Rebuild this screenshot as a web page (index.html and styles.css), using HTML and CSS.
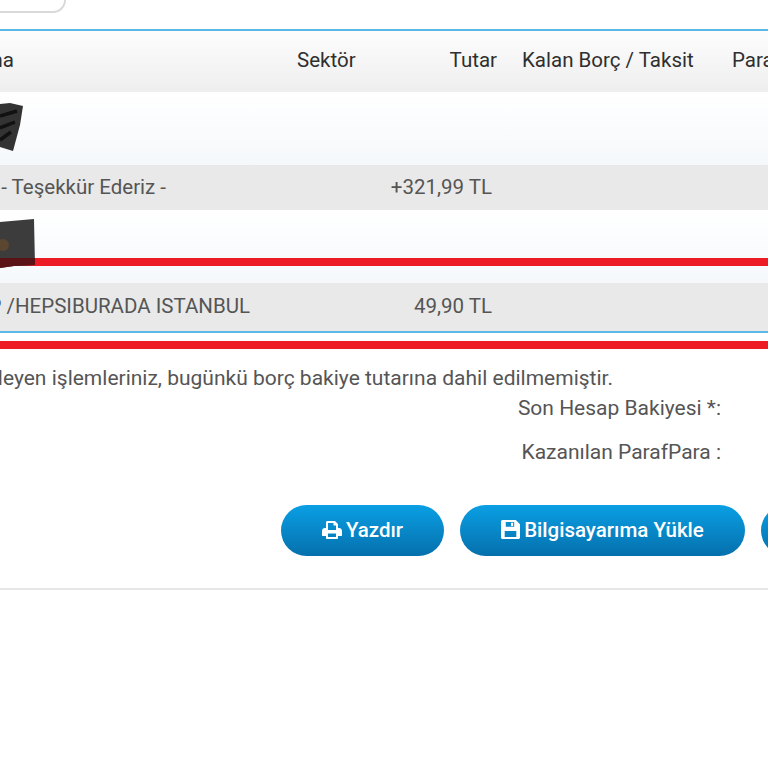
FILE: index.html
```html
<!DOCTYPE html>
<html lang="tr">
<head>
<meta charset="utf-8">
<title>Ekstre</title>
<link rel="stylesheet" href="styles.css">
</head>
<body>
<div class="page">
  <div class="search-box"></div>
  <div class="table">
    <div class="row head">
      <div class="cell desc desc-head">Açıklama</div>
      <div class="cell">Sektör</div>
      <div class="cell amount">Tutar</div>
      <div class="cell debt">Kalan Borç / Taksit</div>
      <div class="cell">ParafPara</div>
    </div>
    <div class="row date">
      <svg class="scribble scribble-one" viewBox="0 0 24 50"><polygon points="0,1 10,0 23,3 20,22 13,48 0,44" fill="#333"/><path d="M0 13 L17 8 M0 25 L15 19 M0 37 L11 29" stroke="#111" stroke-width="3.500" fill="none"/></svg>
    </div>
    <div class="row entry">
      <div class="cell desc desc-thanks">Ödeme - Teşekkür Ederiz -</div>
      <div class="cell"></div>
      <div class="cell amount value">+321,99 TL</div>
    </div>
    <div class="row date">
      <div class="red-line"></div>
      <svg class="scribble scribble-two" viewBox="0 0 35 50"><polygon points="0,3 34,0 35,46 14,47 0,49" fill="#3c3c3c"/><polygon points="0,39 35,39 35,46 14,47 0,49" fill="#5a1216"/><circle cx="3" cy="26" r="6" fill="#5b4630"/></svg>
    </div>
    <div class="row entry entry-last">
      <div class="cell desc desc-shop">ÖDEME APP /HEPSIBURADA ISTANBUL</div>
      <div class="cell"></div>
      <div class="cell amount value">49,90 TL</div>
    </div>
  </div>
  <div class="red-line-flow"></div>
  <div class="note">Bugün işleyen işlemleriniz, bugünkü borç bakiye tutarına dahil edilmemiştir.</div>
  <div class="summary">
    <div class="summary-line">Son Hesap Bakiyesi *:</div>
    <div class="summary-line">Kazanılan ParafPara :</div>
  </div>
  <div class="actions">
    <button class="btn btn-print" type="button">
      <svg class="icon" viewBox="0 0 20 20"><path fill-rule="evenodd" d="M4 8V2.500C4 1.700 4.700 1 5.500 1H13L16 4V8H17C18.700 8 20 9.300 20 11V15.500C20 15.800 19.800 16 19.500 16H16V18C16 18.600 15.600 19 15 19H5C4.400 19 4 18.600 4 18V16H.5C.2 16 0 15.800 0 15.500V11C0 9.300 1.300 8 3 8ZM6 3V10H14V5.500H11.500V3ZM6 13.500V17H14V13.500Z"/></svg>
      Yazdır
    </button>
    <button class="btn btn-save" type="button">
      <svg class="icon icon-save" viewBox="0 0 18 18"><path fill-rule="evenodd" d="M1.500 0H14L18 4V16.500C18 17.300 17.300 18 16.500 18H1.500C.7 18 0 17.300 0 16.500V1.500C0 .7 .7 0 1.500 0ZM4.500 1.800V6.500H12.500V1.800ZM9.500 2.500H11.500V5.800H9.500ZM3.500 10.500V16.200H14.500V10.500Z"/></svg>
      Bilgisayarıma Yükle
    </button>
    <button class="btn btn-next" type="button"></button>
  </div>
  <div class="rule"></div>
</div>
</body>
</html>
```
FILE: styles.css
```css
html, body {
  margin: 0;
  padding: 0;
  height: 768px;
  overflow: hidden;
  background: #fff;
}

.page {
  font-family: Roboto, "Liberation Sans", sans-serif;
  font-size: 20.5px;
  color: #555;
  width: 1100px;
  margin-left: -120px;
}

.search-box {
  box-sizing: border-box;
  width: 186px;
  height: 13px;
  margin-bottom: 16px;
  border: solid #d9d9d9;
  border-width: 0 2px 2px 0;
  border-bottom-right-radius: 16px;
}

.table {
  border-top: 2px solid #5ab9e6;
  border-bottom: 2px solid #5ab9e6;
}

.row {
  display: grid;
  grid-template-columns: 417px 85px 115px 235px 1fr;
  align-items: center;
  position: relative;
}

.head {
  box-sizing: border-box;
  height: 61px;
  padding-bottom: 3px;
  color: #2f2f2f;
  background: linear-gradient(#fdfdfd, #eeeeee);
}

.date {
  height: 73px;
  background: linear-gradient(#ffffff, #f5f8fb);
}

.entry {
  box-sizing: border-box;
  height: 45px;
  padding-bottom: 2px;
  background: #e9e9e9;
}

.entry-last {
  height: 48px;
}

.cell {
  white-space: nowrap;
}

.desc {
  text-align: right;
}

.desc-head {
  padding-right: 283px;
}

.desc-thanks {
  padding-right: 131px;
}

.desc-shop {
  padding-right: 47px;
}

.amount {
  text-align: right;
}

.value {
  padding-right: 5px;
}

.debt {
  padding-left: 25px;
}

.red-line {
  position: absolute;
  left: 0;
  right: 0;
  top: 48px;
  height: 8px;
  background: #ed1c24;
}

.red-line-flow {
  height: 8px;
  margin-top: 8px;
  background: #ed1c24;
}

.scribble {
  position: absolute;
  left: 120px;
}

.scribble-one {
  top: 11px;
  width: 24px;
  height: 50px;
}

.scribble-two {
  top: 9px;
  width: 35px;
  height: 50px;
}

.note {
  margin-top: 17px;
  width: 733px;
  font-size: 21px;
  text-align: right;
  white-space: nowrap;
  line-height: 24px;
}

.summary {
  width: 841px;
  margin-top: 3px;
  font-size: 21px;
  text-align: right;
}

.summary-line {
  height: 44px;
  line-height: 30px;
}

.actions {
  display: flex;
  gap: 16px;
  margin-top: 24px;
  margin-left: 401px;
}

.btn {
  display: flex;
  align-items: center;
  justify-content: center;
  gap: 4px;
  box-sizing: border-box;
  height: 51px;
  border: 0;
  border-radius: 26px;
  padding: 0 0 2px;
  font: 500 20.5px Roboto, "Liberation Sans", sans-serif;
  color: #fff;
  background: linear-gradient(#0a9fe4, #0570ac);
}

.btn-print {
  width: 163px;
}

.btn-save {
  width: 285px;
}

.btn-next {
  width: 120px;
}

.icon {
  width: 20px;
  height: 20px;
  fill: #fff;
}

.icon-save {
  width: 19px;
  height: 19px;
}

.rule {
  height: 2px;
  margin-top: 32px;
  background: #e6e6e6;
}
```
